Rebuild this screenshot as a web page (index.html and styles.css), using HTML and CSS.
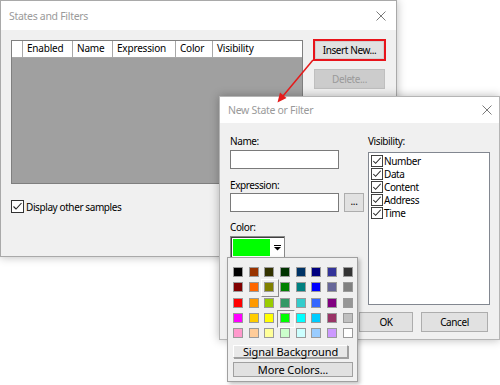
FILE: index.html
```html
<!DOCTYPE html>
<html>
<head>
<meta charset="utf-8">
<title>States and Filters</title>
<link rel="stylesheet" href="styles.css">
</head>
<body>
<svg class="defs" width="0" height="0">
  <defs>
    <symbol id="chk" viewBox="0 0 13 13">
      <rect x="0.5" y="0.5" width="12" height="12" fill="#fff" stroke="#333"/>
      <path d="M2.5 6.5 L5 9 L10.5 3" fill="none" stroke="#222" stroke-width="1.1"/>
    </symbol>
    <symbol id="xicon" viewBox="0 0 10 10">
      <path d="M0.5 0.5 L9.5 9.5 M9.5 0.5 L0.5 9.5" stroke="#7a7a7a" stroke-width="1" fill="none"/>
    </symbol>
  </defs>
</svg>

<div class="win main">
  <div class="titlebar">
    <span class="title">States and Filters</span>
    <svg class="close" width="10" height="10"><use href="#xicon"/></svg>
  </div>
  <div class="main-body">
    <div class="top-row">
      <div class="table">
        <div class="thead">
          <div class="th c0"></div>
          <div class="th c1">Enabled</div>
          <div class="th c2">Name</div>
          <div class="th c3">Expression</div>
          <div class="th c4">Color</div>
          <div class="th c5">Visibility</div>
        </div>
        <div class="tbody"></div>
      </div>
      <div class="side">
        <div class="btn insert">Insert New...</div>
        <div class="btn disabled">Delete...</div>
      </div>
    </div>
    <div class="check-row">
      <svg class="cb" width="13" height="13"><use href="#chk"/></svg>
      <span>Display other samples</span>
    </div>
  </div>
</div>

<div class="win dlg">
  <div class="titlebar">
    <span class="title">New State or Filter</span>
    <svg class="close" width="10" height="10"><use href="#xicon"/></svg>
  </div>
  <div class="dlg-body">
    <div class="col-left">
      <div class="lbl">Name:</div>
      <div class="input name-in"></div>
      <div class="lbl expr-lbl">Expression:</div>
      <div class="expr-row">
        <div class="input"></div>
        <div class="btn dots">...</div>
      </div>
      <div class="lbl color-lbl">Color:</div>
      <div class="combo">
        <div class="swatch-big"></div>
        <div class="drop">
          <svg width="7" height="6" viewBox="0 0 7 6"><rect x="0" y="0" width="7" height="1" fill="#000"/><path d="M0 2 L7 2 L3.5 5.5 Z" fill="#000"/></svg>
        </div>
      </div>
    </div>
    <div class="col-right">
      <div class="lbl">Visibility:</div>
      <div class="list">
        <div class="item"><svg class="cb" width="12" height="12"><use href="#chk"/></svg><span>Number</span></div>
        <div class="item"><svg class="cb" width="12" height="12"><use href="#chk"/></svg><span>Data</span></div>
        <div class="item"><svg class="cb" width="12" height="12"><use href="#chk"/></svg><span>Content</span></div>
        <div class="item"><svg class="cb" width="12" height="12"><use href="#chk"/></svg><span>Address</span></div>
        <div class="item"><svg class="cb" width="12" height="12"><use href="#chk"/></svg><span>Time</span></div>
      </div>
    </div>
    <div class="btn-row">
      <div class="btn ok">OK</div>
      <div class="btn cancel">Cancel</div>
    </div>
  </div>
</div>

<div class="palette">
  <div class="grid">
    <span class="sw" style="background:#000000"></span>
    <span class="sw" style="background:#993300"></span>
    <span class="sw" style="background:#333300"></span>
    <span class="sw" style="background:#003300"></span>
    <span class="sw" style="background:#003366"></span>
    <span class="sw" style="background:#000080"></span>
    <span class="sw" style="background:#333399"></span>
    <span class="sw" style="background:#333333"></span>

    <span class="sw" style="background:#800000"></span>
    <span class="sw" style="background:#FF6600"></span>
    <span class="sw raised" style="background:#808000"></span>
    <span class="sw" style="background:#008000"></span>
    <span class="sw" style="background:#008080"></span>
    <span class="sw" style="background:#0000FF"></span>
    <span class="sw" style="background:#666699"></span>
    <span class="sw" style="background:#808080"></span>

    <span class="sw" style="background:#FF0000"></span>
    <span class="sw" style="background:#FF9900"></span>
    <span class="sw" style="background:#99CC00"></span>
    <span class="sw" style="background:#339966"></span>
    <span class="sw" style="background:#33CCCC"></span>
    <span class="sw" style="background:#3366FF"></span>
    <span class="sw" style="background:#800080"></span>
    <span class="sw" style="background:#969696"></span>

    <span class="sw" style="background:#FF00FF"></span>
    <span class="sw" style="background:#FFCC00"></span>
    <span class="sw" style="background:#FFFF00"></span>
    <span class="sw sunken" style="background:#00FF00"></span>
    <span class="sw" style="background:#00FFFF"></span>
    <span class="sw" style="background:#00CCFF"></span>
    <span class="sw" style="background:#993366"></span>
    <span class="sw" style="background:#C0C0C0"></span>

    <span class="sw" style="background:#FF99CC"></span>
    <span class="sw" style="background:#FFCC99"></span>
    <span class="sw" style="background:#FFFF99"></span>
    <span class="sw" style="background:#CCFFCC"></span>
    <span class="sw" style="background:#CCFFFF"></span>
    <span class="sw" style="background:#99CCFF"></span>
    <span class="sw" style="background:#CC99FF"></span>
    <span class="sw" style="background:#FFFFFF"></span>
  </div>
  <div class="pbtn signal">Signal Background</div>
  <div class="pbtn more">More Colors...</div>
</div>

<svg class="arrow" width="500" height="385" viewBox="0 0 500 385">
  <line x1="313" y1="60" x2="283" y2="96" stroke="#e41b1b" stroke-width="1.5"/>
  <path d="M277.5 102.5 L280 92.5 L286.5 98 Z" fill="#e41b1b"/>
</svg>
</body>
</html>
```

FILE: styles.css
```css
* {
  box-sizing: border-box;
  margin: 0;
  padding: 0;
}

html, body {
  width: 500px;
  height: 385px;
  overflow: hidden;
  background: #ffffff;
}

body {
  position: relative;
  font-family: "Noto Sans", "Open Sans", sans-serif;
  font-size: 10px;
  line-height: 12px;
  letter-spacing: -0.4px;
  color: #000;
}

.defs {
  position: absolute;
}

/* windows on the desktop */
.win {
  position: absolute;
  display: flex;
  flex-direction: column;
  background: #f0f0f0;
  border: 1px solid #a9a9a9;
  box-shadow: 0 0 9px rgba(0, 0, 0, 0.28);
}

.main {
  left: 0;
  top: 0;
  width: 397px;
  height: 257px;
}

.dlg {
  left: 219px;
  top: 96px;
  width: 281px;
  height: 244px;
  border-color: #b5b5b5;
}

.titlebar {
  display: flex;
  align-items: center;
  justify-content: space-between;
  background: #fff;
  color: #9a9a9a;
  font-size: 10.5px;
  letter-spacing: -0.3px;
  flex: none;
}

.main .titlebar {
  height: 29px;
  padding: 0 10px 0 8px;
}

.dlg .titlebar {
  height: 26px;
  padding: 0 7px 0 8px;
}

.close {
  display: block;
}

/* main dialog body */
.main-body {
  padding: 10px 10px 0 10px;
}

.top-row {
  display: flex;
  align-items: flex-start;
  gap: 10px;
}

.table {
  width: 292px;
  height: 144px;
  border: 1px solid #7f7f7f;
  display: flex;
  flex-direction: column;
  background: #a0a0a0;
}

.thead {
  display: flex;
  height: 17px;
  background: #fff;
  border-bottom: 1px solid #a8a8a8;
}

.th {
  border-right: 1px solid #a8a8a8;
  border-left: 1px solid #fff;
  padding-left: 3px;
  line-height: 15px;
  white-space: nowrap;
  letter-spacing: -0.2px;
}

.c0 { width: 11px; }
.c1 { width: 50px; }
.c2 { width: 40px; }
.c3 { width: 63px; }
.c4 { width: 37px; }
.c5 { flex: 1; border-right: none; }

.tbody {
  flex: 1;
  background: #a0a0a0;
}

.side {
  display: flex;
  flex-direction: column;
  margin-top: -1px;
}

.btn {
  display: flex;
  align-items: center;
  justify-content: center;
  background: #e1e1e1;
  border: 1px solid #adadad;
  white-space: nowrap;
}

.insert {
  width: 73px;
  height: 22px;
  border: 2px solid #e8141b;
  box-shadow: inset 0 0 0 1px #d0d0d0;
}

.disabled {
  width: 71px;
  height: 20px;
  margin: 8px 0 0 1px;
  background: #cccccc;
  border-color: #bfbfbf;
  color: #9a9a9a;
}

.check-row {
  display: flex;
  align-items: center;
  gap: 2px;
  margin-top: 16px;
}

.cb {
  display: block;
  flex: none;
}

/* second dialog */
.dlg-body {
  display: grid;
  grid-template-columns: 134px 122px;
  column-gap: 4px;
  padding: 12px 0 0 10px;
}

.col-left {
  display: flex;
  flex-direction: column;
}

.lbl {
  height: 12px;
}

.input {
  width: 109px;
  height: 19px;
  background: #fff;
  border: 1px solid #7a7a7a;
}

.name-in {
  margin-top: 3px;
}

.expr-lbl {
  margin-top: 10px;
}

.expr-row {
  display: flex;
  gap: 5px;
  margin-top: 2px;
}

.dots {
  width: 20px;
  height: 19px;
  padding-bottom: 3px;
}

.color-lbl {
  margin-top: 9px;
}

.combo {
  display: flex;
  width: 55px;
  height: 22px;
  margin-top: 3px;
  border: 1px solid #8a8a8a;
  padding: 2px 0 0 2px;
  background: #fff;
  box-shadow: inset 1px 1px 0 #404040;
}

.swatch-big {
  width: 37px;
  height: 17px;
  background: #00ff00;
}

.drop {
  flex: 1;
  display: flex;
  justify-content: center;
  padding-top: 6px;
}

.drop svg {
  display: block;
}

.col-right {
  display: flex;
  flex-direction: column;
}

.list {
  height: 153px;
  margin-top: 5px;
  background: #fff;
  border: 1px solid #828790;
  padding: 1px 0 0 2px;
}

.item {
  display: flex;
  align-items: center;
  gap: 1px;
  height: 13px;
}

.btn-row {
  grid-column: 1 / 3;
  display: flex;
  justify-content: flex-end;
  gap: 8px;
  padding-right: 2px;
  margin-top: 7px;
}

.ok {
  width: 54px;
  height: 20px;
}

.cancel {
  width: 67px;
  height: 20px;
}

/* colour palette popup */
.palette {
  position: absolute;
  left: 227px;
  top: 257px;
  width: 131px;
  height: 125px;
  background: #f0f0f0;
  border: 1px solid #a0a0a0;
  box-shadow: 2px 2px 4px rgba(0, 0, 0, 0.25);
  padding: 9px 0 0 5px;
  display: flex;
  flex-direction: column;
  align-items: flex-start;
}

.grid {
  display: grid;
  grid-template-columns: repeat(8, 10px);
  grid-auto-rows: 10px;
  column-gap: 5.7px;
  row-gap: 5.25px;
}

.sw {
  position: relative;
  display: block;
  width: 10px;
  height: 10px;
  border: 1px solid #9a9a9a;
}

.raised::after,
.sunken::after {
  content: "";
  position: absolute;
  left: -4px;
  top: -4px;
  width: 16px;
  height: 16px;
  border: 1px solid;
}

.raised::after {
  border-color: #ffffff #8a8a8a #8a8a8a #ffffff;
}

.sunken::after {
  border-color: #8a8a8a #ffffff #ffffff #8a8a8a;
}

.pbtn {
  display: flex;
  align-items: center;
  justify-content: center;
  font-size: 11px;
  letter-spacing: -0.1px;
  white-space: nowrap;
  border: 1px solid #a0a0a0;
  background: #e8e8e8;
}

.signal {
  width: 115px;
  height: 13px;
  margin-top: 7px;
  border-top-color: #fff;
  border-left-color: #fff;
  box-shadow: 1px 1px 0 #a0a0a0;
}

.more {
  width: 120px;
  height: 15px;
  margin-top: 4px;
  background: #e1e1e1;
}

/* red annotation arrow */
.arrow {
  position: absolute;
  left: 0;
  top: 0;
  pointer-events: none;
}
```
